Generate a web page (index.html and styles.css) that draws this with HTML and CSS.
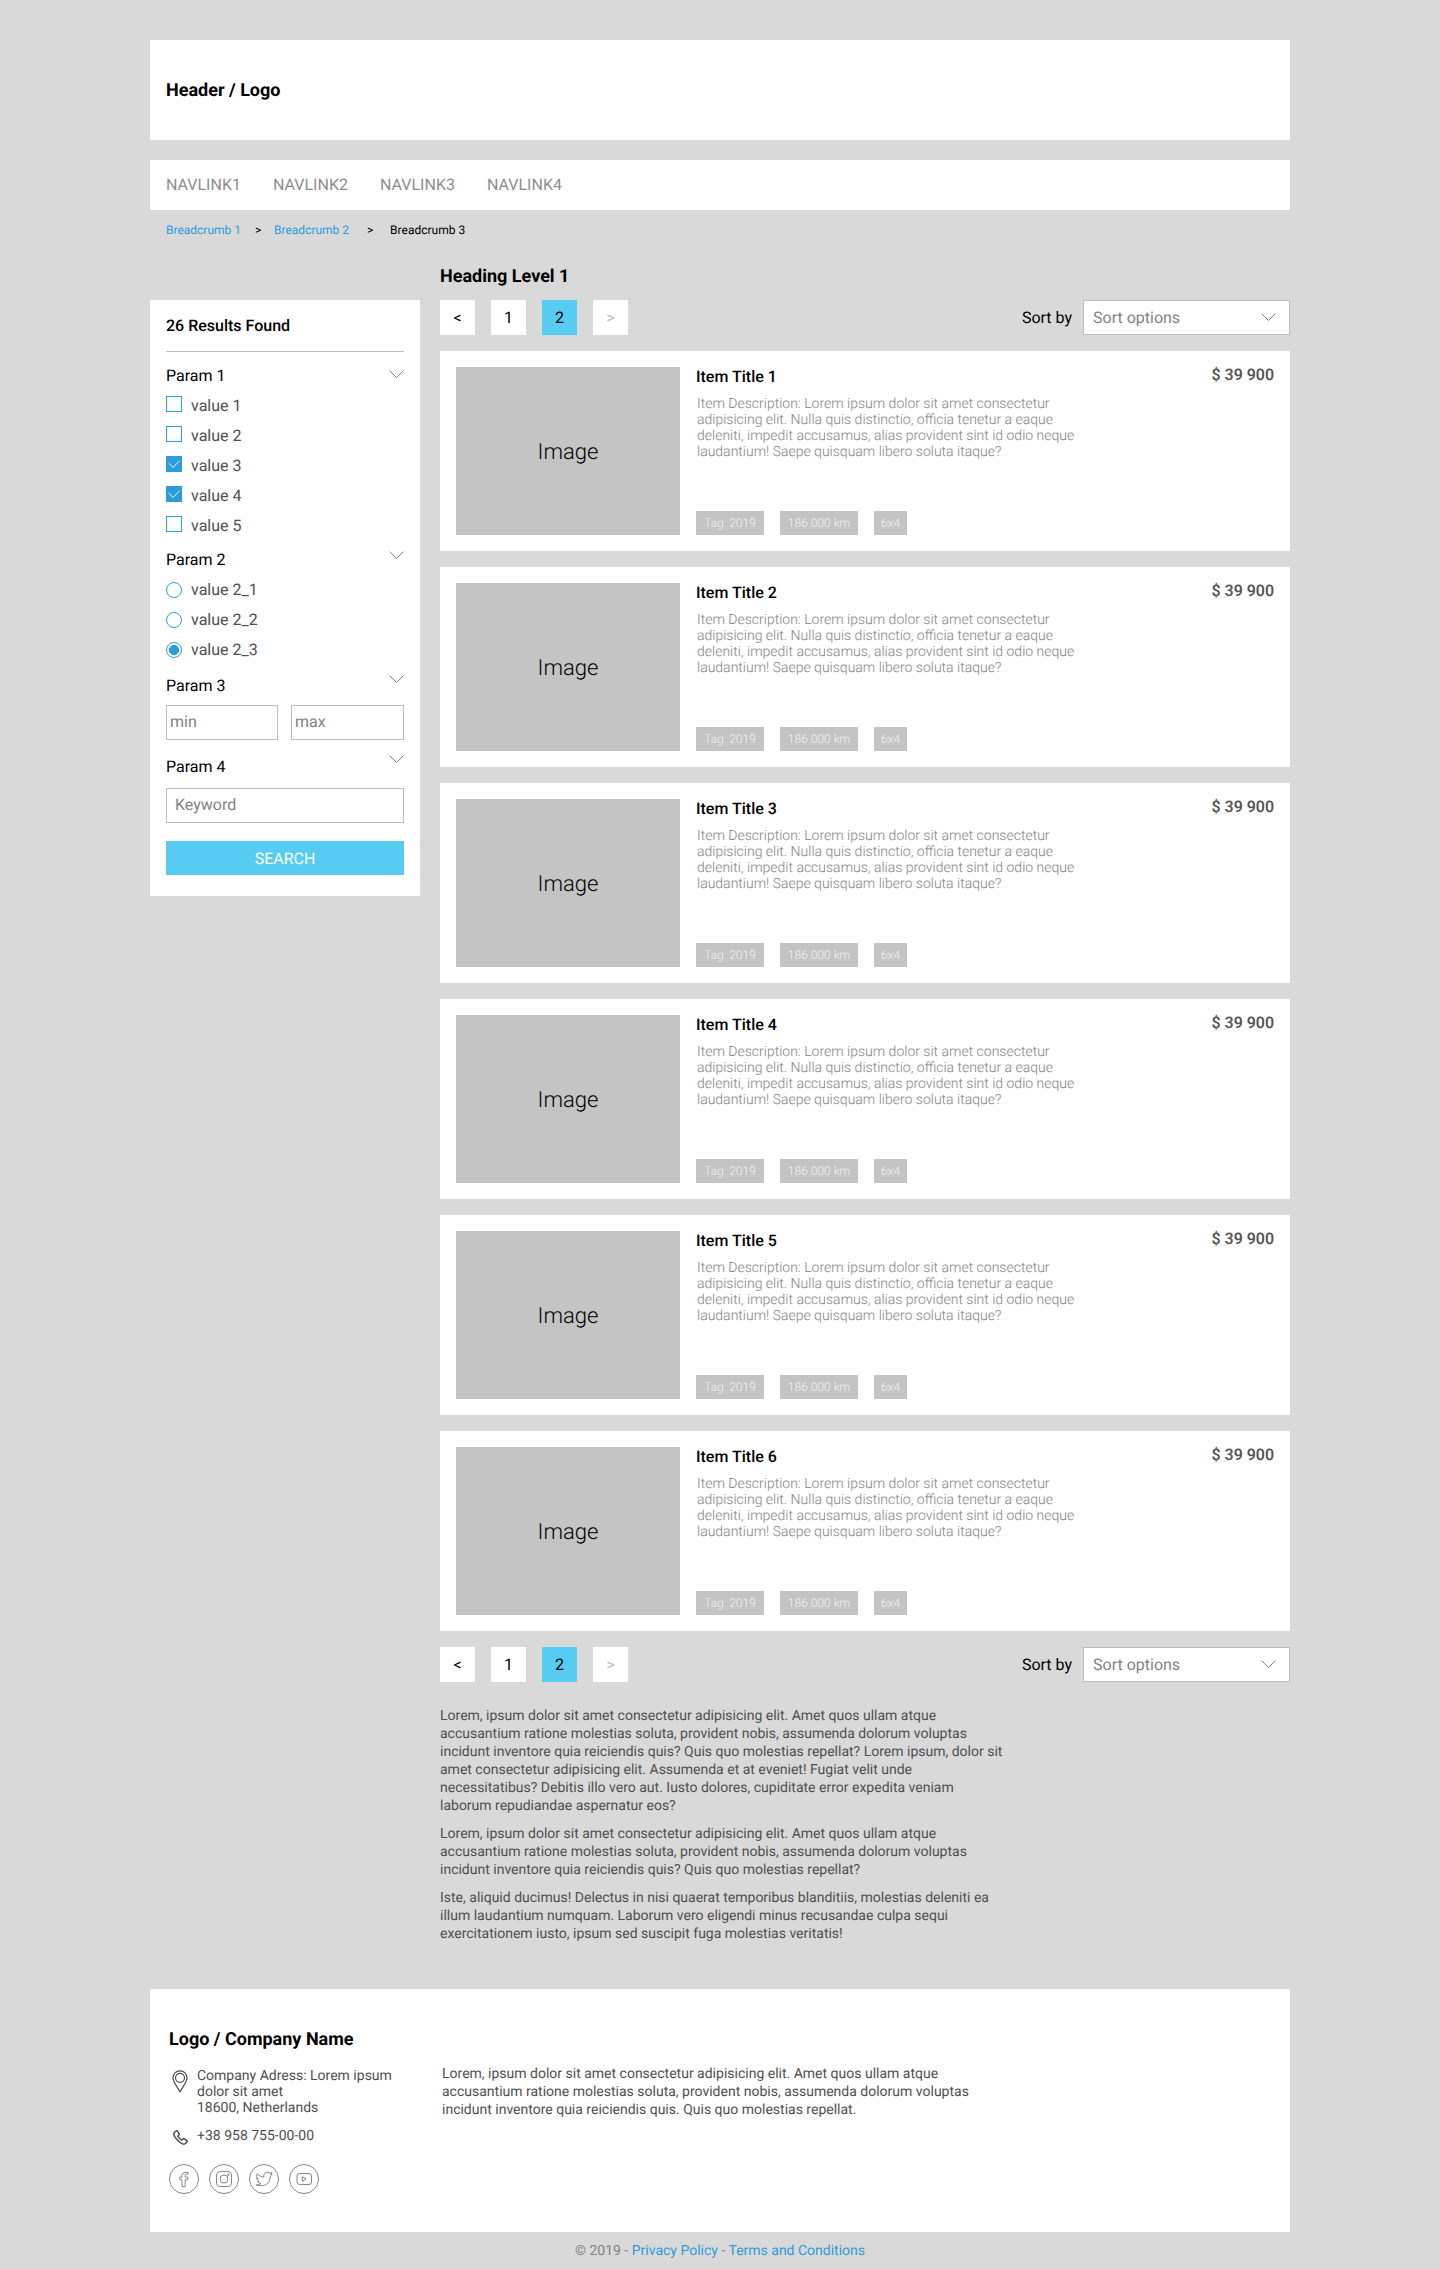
FILE: index.html
```html
<!DOCTYPE html>
<html lang="en">
<head>
<meta charset="utf-8">
<title>Catalog</title>
<link rel="stylesheet" href="styles.css">
</head>
<body>
<svg class="defs" aria-hidden="true">
  <symbol id="chevron" viewBox="0 0 16 9"><path d="M.6.6 8 8 15.4.6" fill="none" stroke="currentColor"/></symbol>
</svg>
<div class="container">
  <header class="header">Header / Logo</header>
  <nav class="nav"><a>NAVLINK1</a><a>NAVLINK2</a><a>NAVLINK3</a><a>NAVLINK4</a></nav>
  <div class="crumbs"><a>Breadcrumb 1</a><span class="sep sep-first">&gt;</span><a>Breadcrumb 2</a><span class="sep">&gt;</span><span>Breadcrumb 3</span></div>

  <div class="layout">
    <aside class="sidebar">
      <h2 class="results">26 Results Found</h2>
      <div class="param param-1"><span>Param 1</span><svg class="chev"><use href="#chevron"/></svg></div>
      <div class="options">
        <label class="option"><i class="check"></i>value 1</label>
        <label class="option"><i class="check"></i>value 2</label>
        <label class="option"><i class="check on"><svg viewBox="0 0 16 16"><path d="M2.7 7.2 7 11.4 13.4 4.9"/></svg></i>value 3</label>
        <label class="option"><i class="check on"><svg viewBox="0 0 16 16"><path d="M2.7 7.2 7 11.4 13.4 4.9"/></svg></i>value 4</label>
        <label class="option"><i class="check"></i>value 5</label>
      </div>
      <div class="param param-2"><span>Param 2</span><svg class="chev"><use href="#chevron"/></svg></div>
      <div class="options radios">
        <label class="option"><i class="radio"></i>value 2_1</label>
        <label class="option"><i class="radio"></i>value 2_2</label>
        <label class="option"><i class="radio on"></i>value 2_3</label>
      </div>
      <div class="param param-3"><span>Param 3</span><svg class="chev"><use href="#chevron"/></svg></div>
      <div class="range"><div class="field">min</div><div class="field">max</div></div>
      <div class="param param-4"><span>Param 4</span><svg class="chev"><use href="#chevron"/></svg></div>
      <div class="field keyword">Keyword</div>
      <div class="search">SEARCH</div>
    </aside>

    <main class="main">
      <h1 class="heading">Heading Level 1</h1>
      <div class="toolbar">
        <div class="pager"><a>&lt;</a><a>1</a><a class="current">2</a><a class="off">&gt;</a></div>
        <div class="sort">Sort by<div class="select">Sort options<svg class="chev"><use href="#chevron"/></svg></div></div>
      </div>
      <div class="items">
        <article class="item"><div class="image">Image</div><div class="body"><h3>Item Title 1</h3><p>Item Description: Lorem ipsum dolor sit amet consectetur<br>adipisicing elit. Nulla quis distinctio, officia tenetur a eaque<br>deleniti, impedit accusamus, alias provident sint id odio neque<br>laudantium! Saepe quisquam libero soluta itaque?</p><div class="tags"><span class="tag">Tag: 2019</span><span class="tag wide">186 000 km</span><span class="tag small">6x4</span></div></div><div class="price">$ 39 900</div></article>
        <article class="item"><div class="image">Image</div><div class="body"><h3>Item Title 2</h3><p>Item Description: Lorem ipsum dolor sit amet consectetur<br>adipisicing elit. Nulla quis distinctio, officia tenetur a eaque<br>deleniti, impedit accusamus, alias provident sint id odio neque<br>laudantium! Saepe quisquam libero soluta itaque?</p><div class="tags"><span class="tag">Tag: 2019</span><span class="tag wide">186 000 km</span><span class="tag small">6x4</span></div></div><div class="price">$ 39 900</div></article>
        <article class="item"><div class="image">Image</div><div class="body"><h3>Item Title 3</h3><p>Item Description: Lorem ipsum dolor sit amet consectetur<br>adipisicing elit. Nulla quis distinctio, officia tenetur a eaque<br>deleniti, impedit accusamus, alias provident sint id odio neque<br>laudantium! Saepe quisquam libero soluta itaque?</p><div class="tags"><span class="tag">Tag: 2019</span><span class="tag wide">186 000 km</span><span class="tag small">6x4</span></div></div><div class="price">$ 39 900</div></article>
        <article class="item"><div class="image">Image</div><div class="body"><h3>Item Title 4</h3><p>Item Description: Lorem ipsum dolor sit amet consectetur<br>adipisicing elit. Nulla quis distinctio, officia tenetur a eaque<br>deleniti, impedit accusamus, alias provident sint id odio neque<br>laudantium! Saepe quisquam libero soluta itaque?</p><div class="tags"><span class="tag">Tag: 2019</span><span class="tag wide">186 000 km</span><span class="tag small">6x4</span></div></div><div class="price">$ 39 900</div></article>
        <article class="item"><div class="image">Image</div><div class="body"><h3>Item Title 5</h3><p>Item Description: Lorem ipsum dolor sit amet consectetur<br>adipisicing elit. Nulla quis distinctio, officia tenetur a eaque<br>deleniti, impedit accusamus, alias provident sint id odio neque<br>laudantium! Saepe quisquam libero soluta itaque?</p><div class="tags"><span class="tag">Tag: 2019</span><span class="tag wide">186 000 km</span><span class="tag small">6x4</span></div></div><div class="price">$ 39 900</div></article>
        <article class="item"><div class="image">Image</div><div class="body"><h3>Item Title 6</h3><p>Item Description: Lorem ipsum dolor sit amet consectetur<br>adipisicing elit. Nulla quis distinctio, officia tenetur a eaque<br>deleniti, impedit accusamus, alias provident sint id odio neque<br>laudantium! Saepe quisquam libero soluta itaque?</p><div class="tags"><span class="tag">Tag: 2019</span><span class="tag wide">186 000 km</span><span class="tag small">6x4</span></div></div><div class="price">$ 39 900</div></article>
      </div>
      <div class="toolbar">
        <div class="pager"><a>&lt;</a><a>1</a><a class="current">2</a><a class="off">&gt;</a></div>
        <div class="sort">Sort by<div class="select">Sort options<svg class="chev"><use href="#chevron"/></svg></div></div>
      </div>
      <div class="copy">
        <p>Lorem, ipsum dolor sit amet consectetur adipisicing elit. Amet quos ullam atque<br>accusantium ratione molestias soluta, provident nobis, assumenda dolorum voluptas<br>incidunt inventore quia reiciendis quis? Quis quo molestias repellat? Lorem ipsum, dolor sit<br>amet consectetur adipisicing elit. Assumenda et at eveniet! Fugiat velit unde<br>necessitatibus? Debitis illo vero aut. Iusto dolores, cupiditate error expedita veniam<br>laborum repudiandae aspernatur eos?</p>
        <p>Lorem, ipsum dolor sit amet consectetur adipisicing elit. Amet quos ullam atque<br>accusantium ratione molestias soluta, provident nobis, assumenda dolorum voluptas<br>incidunt inventore quia reiciendis quis? Quis quo molestias repellat?</p>
        <p>Iste, aliquid ducimus! Delectus in nisi quaerat temporibus blanditiis, molestias deleniti ea<br>illum laudantium numquam. Laborum vero eligendi minus recusandae culpa sequi<br>exercitationem iusto, ipsum sed suscipit fuga molestias veritatis!</p>
      </div>
    </main>
  </div>

  <footer class="footer">
    <div class="company">
      <h2>Logo / Company Name</h2>
      <div class="contact">
        <svg class="pin" viewBox="0 0 16 23"><path d="M8 .8C4 .8 1 3.900 1 7.800c0 4 3.200 7.300 7 14 3.800-6.700 7-10 7-14C15 3.900 12 .8 8 .8z"/><circle cx="8" cy="7.800" r="4.500"/></svg>
        <div>Company Adress: Lorem ipsum<br>dolor sit amet<br>18600, Netherlands</div>
      </div>
      <div class="contact phone-row">
        <svg class="phone" viewBox="0 0 15 15"><path d="M3.300.9 1.500 2.200C-.1 4 1.900 7.600 4.600 10.300c2.700 2.700 6.200 4.700 8 3.200l1.300-1.700c.3-.5.300-.9-.1-1.200l-2.500-1.800c-.5-.3-.9-.2-1.200.1l-.8.9c-.3.300-.7.300-1 .1C7.200 9.200 5.600 7.700 5 6.700c-.2-.4-.1-.7.200-1l.8-.7c.4-.4.400-.8.100-1.200L4.500 1.200C4.200.7 3.800.6 3.300.9z"/></svg>
        <div>+38 958 755-00-00</div>
      </div>
      <div class="social">
        <svg viewBox="0 0 30 30"><circle cx="15" cy="15" r="14.500"/><path d="M13 22.500h3.200v-6.700h2.300l.5-2.700h-2.800v-1.700c0-.8.300-1.300 1.300-1.300H19V8.300h-2.200c-2.600 0-3.800 1.300-3.800 3.300v1.500h-2.200v2.700H13z"/></svg>
        <svg viewBox="0 0 30 30"><circle cx="15" cy="15" r="14.500"/><rect x="7.500" y="7.500" width="15" height="15" rx="3.500"/><circle cx="15" cy="15" r="4"/><circle cx="19.300" cy="10.700" r=".8"/></svg>
        <svg viewBox="0 0 30 30"><circle cx="15" cy="15" r="14.500"/><path d="M7.300 20.800c1.800.2 3.200-.2 4.500-1.100-1.500-.1-2.500-1-3-2.200h1.400C8.600 17 7.700 15.800 7.700 14.200l1.400.4C7.700 13.500 7.300 11.400 8.200 9.700c1.700 2 3.900 3.200 6.600 3.400-.4-2.900 1.200-4.900 3.700-4.900 1.100 0 1.900.4 2.500 1.100l2-.7-1 1.900 1.200-.3-1.800 1.900c0 5.600-3.700 9.600-8.900 9.600-2 0-3.800-.2-5.200-.9z"/></svg>
        <svg viewBox="0 0 30 30"><circle cx="15" cy="15" r="14.500"/><rect x="8" y="9.500" width="14.500" height="11" rx="2.500"/><path d="M13.300 12.700v4.600l3.900-2.300z"/></svg>
      </div>
    </div>
    <p class="about">Lorem, ipsum dolor sit amet consectetur adipisicing elit. Amet quos ullam atque<br>accusantium ratione molestias soluta, provident nobis, assumenda dolorum voluptas<br>incidunt inventore quia reiciendis quis. Quis quo molestias repellat.</p>
  </footer>
  <div class="legal">© 2019 - <a>Privacy Policy</a> - <a>Terms and Conditions</a></div>
</div>
</body>
</html>
```
FILE: styles.css
```css
* { box-sizing: border-box; }
body { margin: 0; background: #d9d9d9; color: #000; font: 16px/20px Roboto, sans-serif; text-rendering: geometricPrecision; }
h1, h2, h3, p { margin: 0; }
.defs { display: none; }
.container { width: 1140px; margin: 0 auto; padding-top: 40px; }
.header { height: 100px; background: #fff; padding: 2px 16px 0; display: flex; align-items: center; font-size: 18px; font-weight: 700; }
.nav { height: 50px; margin-top: 20px; background: #fff; padding: 0 16px; display: flex; align-items: center; color: #8d8d8d; }
.nav a { width: 107px; }
.crumbs { height: 40px; padding: 0 16px; display: flex; align-items: center; font-size: 12px; }
.crumbs a, .legal a { color: #2d9cdb; }
.sep { width: 41px; padding-left: 18px; }
.sep-first { width: 33px; padding-left: 14px; }

.layout { display: flex; align-items: flex-start; gap: 20px; }
.chev { width: 15px; height: 8.500px; color: #757575; flex: none; display: block; }

.sidebar { width: 270px; height: 596px; margin-top: 50px; padding: 0 16px; background: #fff; }
.results { height: 52px; line-height: 51px; font-size: 16px; font-weight: 500; border-bottom: 1px solid #bdbdbd; }
.param { display: flex; justify-content: space-between; align-items: flex-start; height: 20px; }
.param-1 { margin-top: 14px; }
.param-1 .chev { margin-top: 4px; }
.param-2 { margin-top: 4px; }
.param-2 .chev { margin-top: 1px; }
.param-3 { margin-top: 6px; }
.param-3 .chev { margin-top: -1px; }
.param-4 { margin-top: 17px; }
.param-4 .chev { margin-top: -2px; }
.options { display: flex; flex-direction: column; padding-top: 10px; color: #4f4f4f; }
.option { display: flex; height: 30px; gap: 9px; }
.check { width: 16px; height: 16px; border: 1px solid #2d9cdb; }
.check.on { background: #2d9cdb; border: 0; }
.check svg { display: block; width: 16px; height: 16px; fill: none; stroke: #fff; stroke-width: .9; }
.radio { width: 16px; height: 16px; margin-top: 2px; border: 1px solid #2d9cdb; border-radius: 50%; }
.radio.on { background: radial-gradient(circle, #2d9cdb 4.700px, #fff 5.300px); }
.range { display: grid; grid-template-columns: 112px 113px; gap: 13px; padding-top: 9px; }
.field { height: 35px; border: 1px solid #bdbdbd; color: #828282; line-height: 32px; padding-left: 3px; }
.keyword { margin-top: 11px; padding-left: 8px; }
.search { height: 34px; margin-top: 18px; background: #56ccf2; color: #fff; text-align: center; line-height: 35px; }

.main { width: 850px; }
.heading { height: 50px; padding-top: 17px; font-size: 18px; font-weight: 700; }
.toolbar { display: flex; justify-content: space-between; height: 35px; }
.pager { display: flex; gap: 16px; }
.pager a { width: 35px; line-height: 35px; background: #fff; text-align: center; }
.pager a.current { background: #56ccf2; }
.pager a.off { color: #bdbdbd; }
.sort { display: flex; align-items: center; gap: 11px; }
.select { width: 207px; height: 35px; display: flex; align-items: center; justify-content: space-between; padding: 0 13px 0 9px; border: 1px solid #bdbdbd; background: #fff; color: #828282; }
.items { display: flex; flex-direction: column; gap: 16px; padding: 16px 0; }
.item { height: 200px; padding: 16px; display: flex; background: #fff; }
.image { width: 224px; padding-top: 4px; background: #c4c4c4; display: flex; align-items: center; justify-content: center; font-size: 22px; font-weight: 300; }
.body { margin-left: 16px; display: flex; flex-direction: column; flex: 1; }
.body h3 { font-size: 16px; line-height: 20px; font-weight: 500; }
.body p { margin: 9px 0 0 1px; font-size: 14px; line-height: 16px; font-weight: 300; color: #828282; }
.tags { display: flex; gap: 16px; margin-top: auto; }
.tag { width: 68px; height: 24px; line-height: 24px; background: #c4c4c4; color: #f2f2f2; font-size: 12px; font-weight: 300; text-align: center; }
.tag.wide { width: 78px; }
.tag.small { width: 33px; }
.price { color: #4f4f4f; font-weight: 500; line-height: 16px; }
.copy { display: flex; flex-direction: column; gap: 10px; padding-top: 25px; font-size: 14px; line-height: 18px; color: #4f4f4f; }

.footer { height: 243px; margin-top: 46px; background: #fff; display: flex; font-size: 14px; line-height: 16px; color: #4f4f4f; }
.company { width: 292px; padding: 41px 0 0 19px; }
.company h2 { font-size: 18px; line-height: 20px; font-weight: 700; color: #000; }
.contact { display: flex; margin-top: 18px; }
.contact svg { fill: none; stroke: #4f4f4f; stroke-width: 1.200; flex: none; }
.pin { width: 16px; height: 23px; margin: 2px 9px 0 3px; }
.contact .phone { width: 15px; height: 15px; margin: 2px 9px 0 4px; stroke-width: 1.500; }
.phone-row { margin-top: 12px; }
.social { display: flex; gap: 10px; margin-top: 19px; }
.social svg { width: 30px; height: 30px; fill: none; stroke: #6a6a6a; stroke-width: .8; }
.about { padding-top: 76px; line-height: 18px; }
.legal { height: 37px; line-height: 39px; text-align: center; font-size: 14px; color: #828282; }
```
